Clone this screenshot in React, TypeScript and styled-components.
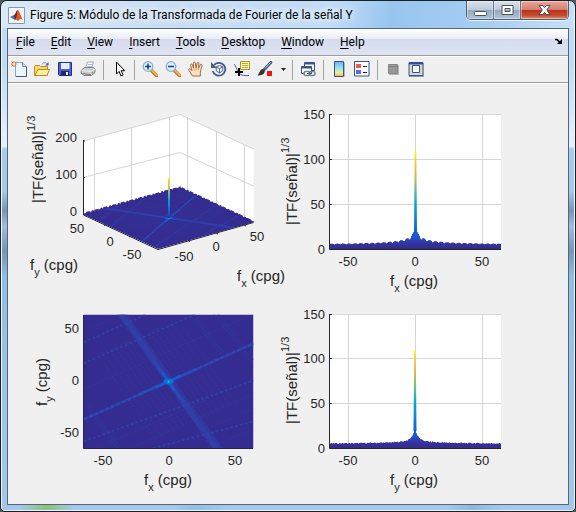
import React from "react";
import styled, { createGlobalStyle } from "styled-components";

const GlobalStyle = createGlobalStyle`
  * { box-sizing: border-box; }
  html, body, #root { height: 100%; }
  body { margin: 0; background: #55585c; overflow: hidden; }
`;

const Frame = styled.div`
  min-height: 100vh;
  display: flex;
  flex-direction: column;
  padding: 0 6px 6px;
  border: 1px solid #1b2027;
  border-radius: 7px 7px 5px 5px;
  box-shadow: inset 0 0 0 1px #eaf5ff;
  font-family: Roboto, "Open Sans", sans-serif;
  color: #000;
  background:
    linear-gradient(90deg, transparent 30%, #7fb0dd66 34%, transparent 39%, transparent 78%, #6f9cc466 82%, transparent 87%) bottom / 100% 7px no-repeat,
    radial-gradient(circle at 8%, #8fc07a 0, transparent 5%) bottom left / 100% 7px no-repeat,
    linear-gradient(#c4dcf3 0, #c2dbf2 60px, #d0e3f5 95px, #e8f1fa 145px, #a9cbec 148px, #a7c8e8 190px, #7894b4 210px, #a3bcdd 225px, #7795b5 250px, #8fbde2 275px, #9ec3e6 380px, #a5c8e8 100%);
`;

const TitleBar = styled.header`
  height: 27px;
  display: flex;
  align-items: flex-start;
  gap: 5px;
  margin: 0 -5px;
  padding: 1px 0 0 6px;
  border-radius: 6px 6px 0 0;
  background: linear-gradient(100deg, #d9e8f6 0, #c9def3 30%, #c0dcf6 58%, #98c5ef 68%, #a6cdf2 84%, #c9e0f5 100%);
`;

const AppIcon = styled.svg`
  width: 17px;
  height: 17px;
  margin-top: 5px;
  flex: none;
`;

const Title = styled.h1`
  flex: 1;
  margin: 0;
  padding-top: 3px;
  font-size: 12px;
  font-weight: 400;
  line-height: 20px;
  white-space: nowrap;
  text-shadow: 0 0 6px #fff, 0 0 8px #fff;
`;

const Caption = styled.div`
  display: flex;
  height: 19px;
  margin: -1px 5px 0 0;
  border: 1px solid #4d6076;
  border-top: 0;
  border-radius: 0 0 5px 5px;
  overflow: hidden;
  box-shadow: 0 1px 0 #e8f4ff;
`;

const CaptionButton = styled.button<{ $close?: boolean }>`
  width: ${(p) => (p.$close ? 47 : 27)}px;
  padding: 0;
  display: flex;
  align-items: center;
  justify-content: center;
  border: 0;
  border-right: ${(p) => (p.$close ? "0" : "1px solid #62768d")};
  box-shadow: inset 0 0 0 1px #ffffff66;
  background: ${(p) =>
    p.$close
      ? "linear-gradient(#e5a99c 0, #d5806f 48%, #b9341e 52%, #c84a2d 80%, #e0906c 100%)"
      : "linear-gradient(#d8e2ec 0, #bccad9 48%, #93a9bf 52%, #afc4d8 100%)"};
`;

const Client = styled.main`
  flex: 1;
  display: flex;
  flex-direction: column;
  border: 1px solid #51677c;
  background: #f0f0f0;
`;

const MenuBar = styled.nav`
  height: 27px;
  display: flex;
  align-items: center;
  border-bottom: 1px solid #9c9c9c;
  background: linear-gradient(#fff 0, #e9edf6 10px, #d5dbed 10px, #dfe4f3 100%);
`;

const MenuButton = styled.button`
  border: 0;
  padding: 0 8px;
  background: none;
  font-family: inherit;
  font-size: 12px;
  line-height: 20px;
  color: #000;
  u { text-underline-offset: 2px; }
`;

const DockButton = styled.button`
  margin-left: auto;
  width: 16px;
  height: 16px;
  margin-right: 1px;
  padding: 4px;
  border: 0;
  background: none;
  display: flex;
`;

const ToolBar = styled.div`
  height: 27px;
  display: flex;
  align-items: center;
  border-top: 1px solid #fff;
  border-bottom: 1px solid #9c9c9c;
`;

const Tool = styled.button<{ $narrow?: boolean }>`
  width: ${(p) => (p.$narrow ? 12 : 23)}px;
  height: 24px;
  padding: ${(p) => (p.$narrow ? "3px 1px 5px" : "3px 4px 5px 3px")};
  border: 0;
  background: none;
  display: flex;
  svg { display: block; }
`;

const Separator = styled.span`
  width: 1px;
  height: 20px;
  margin: 0 4px 0 3px;
  background: #a2a2a2;
`;

const Figure = styled.section`
  flex: 1;
  display: grid;
  grid-template-columns: 1fr 1fr;
  grid-template-rows: 210fr 211fr;
  box-shadow: inset 0 1px 0 #fff;
`;

const Chart = styled.svg`
  width: 100%;
  height: 100%;
  min-height: 0;
  overflow: visible;
  font-family: "Liberation Sans", Arial, sans-serif;
  fill: #262626;
`;

const Tick = styled.text`
  font-size: 13px;
`;

const Label = styled.text`
  font-size: 15px;
`;

const Small = styled.tspan`
  font-size: 11px;
`;

function Icon({ children, w = 16 }: { children: React.ReactNode; w?: number }) {
  return (
    <svg width={w} height="16" viewBox={`0 0 ${w} 16`}>
      {children}
    </svg>
  );
}

const Magnifier = ({ plus }: { plus?: boolean }) => (
  <Icon>
    <path d="M9.5 9.5 15 15" stroke="#b06c24" strokeWidth="3.4" strokeLinecap="round" />
    <path d="M10 9.5 15 14.3" stroke="#f9b04f" strokeWidth="2.2" strokeLinecap="round" />
    <circle cx="6" cy="5.5" r="4.8" fill="#d9f2fb" stroke="#8fabd2" strokeWidth="1.3" />
    <path d={plus ? "M3 5.5h6M6 2.5v6" : "M3 5.5h6"} stroke="#24418c" strokeWidth="1.6" />
  </Icon>
);

const icons: Record<string, React.ReactNode> = {
  new: (
    <Icon>
      <path d="M4.5 1.5h7l4 4v10h-11z" fill="#edf5ff" stroke="#8aa3cf" />
      <path d="M5 15.5h10.5V6" fill="none" stroke="#3c5a96" />
      <path d="M11.5 1.5v4h4" fill="#c2d6f2" stroke="#6b87bb" />
      <path d="M3 0v6M0 3h6M.8 .8l4.4 4.4M5.2.8.8 5.2" stroke="#e0703f" />
      <circle cx="3" cy="3" r="1.3" fill="#ffe9a8" />
    </Icon>
  ),
  open: (
    <Icon>
      <path d="M.5 14.5v-9l1-1h4l1 1h7v9z" fill="#f4d775" stroke="#b98d1f" />
      <path d="M1 14.5 4 8.5h11.5l-2.5 6z" fill="#fff0a0" stroke="#b98d1f" />
      <path d="M8 3.5c1-2.5 4-2.5 5-.5" fill="none" stroke="#7187b0" />
      <path d="M14.5 1v3.5H11z" fill="#4d6591" />
    </Icon>
  ),
  save: (
    <Icon>
      <path d="M1.5 1.5h13v13h-12l-1-1z" fill="#4c5fd0" stroke="#25308c" />
      <path d="M4 2h8v6H4z" fill="#e4edfa" />
      <path d="M12.5 2v6" stroke="#8fa2ea" />
      <path d="M4 10h8v4.5H4z" fill="#25276e" />
      <path d="M9 11h2v3H9z" fill="#f4f7ff" />
    </Icon>
  ),
  print: (
    <Icon>
      <path d="m5.5 7 2-6h6l-2 6z" fill="#fff" stroke="#9aa6bd" />
      <path d="M8 3.5h4M7.5 5.5h4" stroke="#a7b6cd" />
      <path d="m1.5 9 3-2.5h9l1.5 1.5v3.500l-3.500 3H4L1 12z" fill="#cbcdd0" stroke="#7d8085" />
      <path d="m1.500 9.500 9.500 1 4-2.500" fill="none" stroke="#f0f0f0" />
      <path d="m2.500 12.500 8.500 1.200" stroke="#777" />
      <circle cx="12.500" cy="11.500" r=".9" fill="#74a54c" />
    </Icon>
  ),
  pointer: (
    <Icon>
      <path d="M5.500 1v12l2.600-2.600 1.900 4.600 2.100-1-2-4.300h3.600z" fill="#fff" stroke="#000" />
    </Icon>
  ),
  zoomIn: <Magnifier plus />,
  zoomOut: <Magnifier />,
  pan: (
    <Icon>
      <path
        d="M4.500 15 1 9.500C0 8 1.600 7.200 2.700 8.400l1.200 1.300-1.300-5.200c-.4-1.700 1.400-2.200 1.900-.6l1.100 3.400-.3-5c0-1.700 1.900-1.700 2.100 0l.6 4.700L9 2.300c.2-1.600 2-1.300 1.900.2l-.5 5 1.800-3.600c.8-1.300 2.400-.5 1.800 1L12.300 11v4z"
        fill="#ffe1c2"
        stroke="#a06a42"
      />
      <path d="m5.600 7.500.5 2M8 7v2.500M10.400 7.500l-.3 2" stroke="#d69a69" />
    </Icon>
  ),
  rotate: (
    <Icon>
      <path d="M3.200 3.800a6.400 6.400 0 1 1-1.500 6.200" fill="none" stroke="#4a5c84" strokeWidth="1.800" />
      <path d="M0 1v6h6z" fill="#4a5c84" />
      <path d="m8.500 4.500 3.300 1.300v4L8.500 12l-3.300-2.200v-4z" fill="#e5edf8" stroke="#536892" />
      <path d="m5.200 6 3.300 1.500L11.800 6M8.500 7.500V12" fill="none" stroke="#536892" />
    </Icon>
  ),
  dataCursor: (
    <Icon>
      <path d="M6.500.5h9v8h-9z" fill="#fff9a9" stroke="#a69b32" />
      <path d="M8 2.500h6M8 4.500h6M8 6.500h6" stroke="#b9ae55" />
      <path d="M0 3c2 1 2 5 4 8s5 4 11 3.500" fill="none" stroke="#4b55c8" />
      <path d="M5 7v8M1 11h8" stroke="#000" strokeWidth="2" />
    </Icon>
  ),
  brush: (
    <Icon>
      <path d="m13.800 1.400-6.500 7" stroke="#4a5a7c" strokeWidth="3" strokeLinecap="round" />
      <path d="m13.600 1.400-5.500 6" stroke="#b5c4dd" />
      <path d="M7.800 9.700c.3 3.800-3.600 4.700-7.300 4.800C2 13 2.500 8.500 6 8z" fill="#3d3532" />
      <path d="M10 10h5v5h-5z" fill="#fa1010" />
    </Icon>
  ),
  caret: (
    <Icon w={10}>
      <path d="M3 7h5L5.500 10z" fill="#222" />
    </Icon>
  ),
  link: (
    <Icon>
      <path d="M4.500 1.500h10v8h-10z" fill="#fff" stroke="#3a5588" />
      <path d="M4.500 2.500h10" stroke="#3a5588" strokeWidth="2" />
      <path d="M1.500 5.500h10v7h-10z" fill="#fff" stroke="#3a5588" />
      <path d="M1.500 6.500h10" stroke="#3a5588" strokeWidth="2" />
      <rect x="4" y="10.500" width="6" height="4" rx="2" fill="#fff" stroke="#72808f" strokeWidth="1.400" />
      <rect x="9" y="10.500" width="6" height="4" rx="2" fill="none" stroke="#72808f" strokeWidth="1.400" />
      <path d="M7 12.500h5" stroke="#4a5766" />
    </Icon>
  ),
  colorbar: (
    <Icon>
      <defs>
        <linearGradient id="cb" x2="0" y2="1">
          <stop stopColor="#83a6fb" />
          <stop offset=".45" stopColor="#8cecec" />
          <stop offset=".75" stopColor="#f1ed91" />
          <stop offset="1" stopColor="#f7a478" />
        </linearGradient>
      </defs>
      <path d="M3.500.5h9v15h-9z" fill="url(#cb)" stroke="#35538c" />
      <path d="M13.500 1.500v14" stroke="#a6b3c9" />
    </Icon>
  ),
  legend: (
    <Icon>
      <path d="M.5.500h14.500v14.500H.5z" fill="#fff" stroke="#35538c" />
      <path d="M2 3h5v4H2z" fill="#ef5b4f" />
      <path d="M2 9h5v4H2z" fill="#5a6be4" />
      <path d="M9 5.500h4M9 11.500h4" stroke="#222" />
    </Icon>
  ),
  hideTools: (
    <Icon>
      <path d="M4 4h10v10H4z" fill="#b8b8b8" />
      <path d="M3.500 3.500h9v9h-9z" fill="#989898" stroke="#868686" />
      <path d="M4 5.500h8" stroke="#858585" />
    </Icon>
  ),
  showTools: (
    <Icon>
      <path d="M1 1.500h14v13H1z" fill="#d7d8c8" stroke="#3a5390" />
      <path d="M1 2.500h14" stroke="#2f4aa8" strokeWidth="2" />
      <path d="M4.500 4.500h7v7h-7z" fill="#fff" stroke="#3a5390" />
      <path d="M15.500 2v13.500H1" fill="none" stroke="#8994ad" />
    </Icon>
  ),
};

const toolGroups = [
  [["new", "New Figure"], ["open", "Open File"], ["save", "Save Figure"], ["print", "Print Figure"]],
  [["pointer", "Edit Plot"]],
  [["zoomIn", "Zoom In"], ["zoomOut", "Zoom Out"], ["pan", "Pan"], ["rotate", "Rotate 3D"], ["dataCursor", "Data Cursor"], ["brush", "Brush"], ["caret", "Brush Colors"]],
  [["link", "Link Plot"]],
  [["colorbar", "Insert Colorbar"], ["legend", "Insert Legend"]],
  [["hideTools", "Hide Plot Tools"], ["showTools", "Show Plot Tools"]],
];

const menus = ["File", "Edit", "View", "Insert", "Tools", "Desktop", "Window", "Help"];

const parula: [number, string][] = [
  [0, "#352a87"], [0.06, "#3534a4"], [0.12, "#1f55d0"], [0.2, "#0567e0"], [0.32, "#1485d4"],
  [0.45, "#06a7c6"], [0.58, "#4fbb96"], [0.7, "#a8be6b"], [0.82, "#f0ba4b"], [0.92, "#fbce2f"], [1, "#f9fb0e"],
];

function Parula({ id, bottom, top }: { id: string; bottom: number; top: number }) {
  return (
    <linearGradient id={id} gradientUnits="userSpaceOnUse" x1="0" x2="0" y1={bottom} y2={top}>
      {parula.map(([o, c]) => (
        <stop key={o} offset={o} stopColor={c} />
      ))}
    </linearGradient>
  );
}

const noise = (n: number) => {
  const v = Math.sin(n * 12.9898) * 43758.5453;
  return v - Math.floor(v);
};

/* Height in pixels of the projected spectrum at distance d from its centre. */
function lobed(d: number) {
  const a = Math.abs(d);
  if (a < 5.5) return 18 - a * a * 0.3;
  return 3.6 + 82 / (a + 10) + (0.6 + 24 / (a + 3)) * Math.abs(Math.cos((Math.PI * (a - 8.5)) / 5.8));
}

function smooth(d: number) {
  const a = Math.abs(d);
  return 3.6 + 58 / (a + 11) + 10 * Math.exp(-a / 3) + noise(Math.round(d) + 200) * 0.8;
}

function spectrum(height: (d: number) => number, base: number, cx: number) {
  let d = `M330 ${base}`;
  for (let x = 330; x < 501; x++) {
    d += `V${(base - height(x + 0.5 - cx)).toFixed(1)}H${x + 1}`;
  }
  return `${d}V${base}Z`;
}

type ProfileProps = {
  id: string;
  view: string;
  top: number;
  step: number;
  axis: string;
  height: (d: number) => number;
  cx: number;
};

function Profile({ id, view, top, step, axis, height, cx }: ProfileProps) {
  const base = Math.round(top + 3 * step);
  return (
    <Chart viewBox={view}>
      <defs>
        <Parula id={id} bottom={base} top={base - 98} />
      </defs>
      <rect x="330" y={top} width="171" height={base - top} fill="#fff" />
      <g stroke="#d5d5d5">
        {[349, 416, 483].map((x) => (
          <path key={x} d={`M${x - 0.5} ${top}V${base}`} />
        ))}
        {[0, 1, 2].map((n) => (
          <path key={n} d={`M330 ${Math.floor(top + n * step) + 0.5}H501`} />
        ))}
      </g>
      <path d={spectrum(height, base, cx)} fill={`url(#${id})`} />
      <path d={`M${cx - 1.5} ${base - 17}L${cx - 0.8} ${base - 98}h1.600L${cx + 1.5} ${base - 17}z`} fill={`url(#${id})`} />
      <path
        d={`M501 ${base + 0.5}H329.500V${top}M330 ${top + 0.5}h2M330 ${Math.floor(top + step) + 0.5}h2M330 ${Math.floor(top + 2 * step) + 0.5}h2`}
        fill="none"
        stroke="#262626"
      />
      {[150, 100, 50, 0].map((v, n) => (
        <Tick key={v} x="325" y={Math.round(top + 4.500 + n * step)} textAnchor="end">{v}</Tick>
      ))}
      {[[-50, 348], [0, 415], [50, 482]].map(([v, x]) => (
        <Tick key={v} x={x} y={base + 17} textAnchor="middle">{v}</Tick>
      ))}
      <Label x="390" y={base + 37}>
        f<Small dy="6">{axis}</Small>
        <tspan dy="-6"> (cpg)</tspan>
      </Label>
      <Label transform={`translate(297 ${base - 24}) rotate(-90)`}>
        |TF(señal)|<Small dy="-8">1/3</Small>
      </Label>
    </Chart>
  );
}

/* Spectrum seen from above; coordinates run over 170 by 134 units. */
function SpectrumMap() {
  return (
    <g clipPath="url(#mapClip)" fill="none">
      <rect width="170" height="134" fill="#352d91" />
      <g stroke="#3341a6" strokeWidth="1" opacity=".5" strokeDasharray="2 2">
        {[-40, -34, -28, -22, -17, -12, -8, 8, 12, 17, 22, 28, 34, 40].map((o) => (
          <path key={o} d={`M${85 + o - 28} ${67 - 40 - o * 0.45}L${85 + o + 28} ${67 + 40 - o * 0.45}`} />
        ))}
        {[-88, -58, -30, 35, 50, 65, 85].map((o) => (
          <path key={o} d={`M0 ${105 + o}L170 ${29 + o}`} />
        ))}
      </g>
      <path d="M33-8 140 142" stroke="#3140a8" strokeWidth="9" opacity=".5" />
      <path d="M38 0 133 134" stroke="#2f45b0" strokeWidth="5" opacity=".6" />
      <g stroke="#2e4bb4" strokeWidth="2" opacity=".6" strokeDasharray="3 2">
        <path d="M0 28 64-1M0 49 112 0M0 127 170 66M50 139 170 107" />
      </g>
      <g stroke="#2f43a9" strokeWidth="6" opacity=".45" strokeDasharray="1 2">
        <path d="M132-2 170 48M0 86 38 138M108 0 140 40" />
      </g>
      <path d="M0 105 170 29" stroke="#2f48b2" strokeWidth="3" opacity=".5" />
      <path d="M0 105 170 29" stroke="#2a51bf" strokeWidth="2" strokeDasharray="4 2" opacity=".75" />
      <path d="M55 80 115 54M70 46 100 88" stroke="#2258c8" strokeWidth="3" opacity=".4" />
      <path d="M72 73 98 61M79 58 91 76" stroke="#1463d8" strokeWidth="3" opacity=".6" />
      <ellipse cx="85" cy="67" rx="5" ry="3" fill="#0872de" />
      <circle cx="85" cy="67" r="1" fill="#39bfae" />
    </g>
  );
}

function Surface() {
  return (
    <Chart viewBox="8 83 280 210">
      <defs>
        <Parula id="surfaceSpike" bottom={218} top={178} />
        <clipPath id="mapClip">
          <path d="M0 0H170V134H0Z" />
        </clipPath>
      </defs>
      <path d="M83 141 180 114.500 253.500 149V222L158 249 83 214.500Z" fill="#fff" />
      <path
        d="M83 141 180 114.500 253.500 149M83 177.500 180 152.500 253.500 186M94.500 138V211M131.500 128V201M169.500 117.500V191M187.500 118V191M216.500 131.500V205M244.500 145V218"
        fill="none"
        stroke="#d5d5d5"
      />
      <path d="M83.500 140V215L158 249.500 253.500 222.500M83 141h2M83 177.500h2M106 224.500l-2 1M131 236l-2 1M188 240.500l2 1M216 233l2 1M244 225l2 1" fill="none" stroke="#262626" />
      <g transform="matrix(.571 -.159 .56 .257 83 214.500)">
        <SpectrumMap />
      </g>
      <path d="M84 214 180 188 253 222" fill="none" stroke="#352b89" strokeWidth="1" />
      <path d="M86 213 180 187.500 252 221" fill="none" stroke="#352b89" strokeWidth="2" strokeDasharray="4 2 2 1" />
      <path d="M168 214V178h2V214l3 2-4 2-5-2z" fill="url(#surfaceSpike)" />
      <Tick x="77" y="142" textAnchor="end">200</Tick>
      <Tick x="77" y="179" textAnchor="end">100</Tick>
      <Tick x="77" y="216" textAnchor="end">0</Tick>
      <Tick x="77" y="233" textAnchor="middle">50</Tick>
      <Tick x="110" y="246" textAnchor="middle">0</Tick>
      <Tick x="132" y="259" textAnchor="middle">-50</Tick>
      <Tick x="184" y="261" textAnchor="middle">-50</Tick>
      <Tick x="216" y="251" textAnchor="middle">0</Tick>
      <Tick x="257" y="241" textAnchor="middle">50</Tick>
      <Label x="30" y="270">
        f<Small dy="6">y</Small>
        <tspan dy="-6"> (cpg)</tspan>
      </Label>
      <Label x="237" y="281">
        f<Small dy="6">x</Small>
        <tspan dy="-6"> (cpg)</tspan>
      </Label>
      <Label transform="translate(43 203) rotate(-90)">
        |TF(señal)|<Small dy="-8">1/3</Small>
      </Label>
    </Chart>
  );
}

function TopView() {
  return (
    <Chart viewBox="8 293 280 211">
      <g transform="translate(83.500 314.500)">
        <SpectrumMap />
      </g>
      <path d="M83.500 315V448.500H253" fill="none" stroke="#262640" />
      {[[50, 333], [0, 385], [-50, 437]].map(([v, y]) => (
        <Tick key={v} x="79" y={y} textAnchor="end">{v}</Tick>
      ))}
      {[[-50, 103], [0, 169], [50, 235]].map(([v, x]) => (
        <Tick key={v} x={x} y="465" textAnchor="middle">{v}</Tick>
      ))}
      <Label x="144" y="485">
        f<Small dy="6">x</Small>
        <tspan dy="-6"> (cpg)</tspan>
      </Label>
      <Label transform="translate(47 406) rotate(-90)">
        f<Small dy="6">y</Small>
        <tspan dy="-6"> (cpg)</tspan>
      </Label>
    </Chart>
  );
}

export default function App() {
  return (
    <>
      <GlobalStyle />
      <Frame>
        <TitleBar>
          <AppIcon viewBox="0 0 17 17">
            <path d="M.5.500h16v16H.5z" fill="#eef4fa" stroke="#8c98a5" />
            <path d="m2 10 4-2 3 3-2 2z" fill="#3c76b8" />
            <path d="M6 8c2-1 2-5 4-5l-1 8-2 2z" fill="#6b2b22" />
            <path d="M10 3c2 2 3 7 5 10-2-2-3-1-5 1L7.500 12C9 10 9 6 10 3z" fill="#df5a22" />
          </AppIcon>
          <Title>Figure 5: Módulo de la Transformada de Fourier de la señal Y</Title>
          <Caption>
            <CaptionButton aria-label="Minimize">
              <svg width="13" height="16">
                <rect x=".5" y="9.500" width="12" height="4" rx="1" fill="#fff" stroke="#4b5264" />
              </svg>
            </CaptionButton>
            <CaptionButton aria-label="Maximize">
              <svg width="13" height="12">
                <path d="M1 1.500h11v9H1zM4 4.500h5v3H4z" fill="#fff" fillRule="evenodd" stroke="#4b5264" />
              </svg>
            </CaptionButton>
            <CaptionButton $close aria-label="Close">
              <svg width="13" height="12">
                <path d="M1 1.500h3.500l2 2 2-2H12L8.800 6l3.200 4.500H8.500l-2-2-2 2H1L4.200 6z" fill="#fff" stroke="#4d4556" />
              </svg>
            </CaptionButton>
          </Caption>
        </TitleBar>
        <Client>
          <MenuBar>
            {menus.map((m) => (
              <MenuButton key={m}>
                <u>{m[0]}</u>
                {m.slice(1)}
              </MenuButton>
            ))}
            <DockButton aria-label="Dock figure">
              <svg width="8" height="8" viewBox="0 0 8 8">
                <path d="M0 1.500h2l3 3" fill="none" stroke="#000" strokeWidth="1.600" />
                <path d="M7 1v5H2z" fill="#000" />
              </svg>
            </DockButton>
          </MenuBar>
          <ToolBar role="toolbar">
            {toolGroups.map((group, n) => (
              <React.Fragment key={n}>
                {n > 0 && <Separator />}
                {group.map(([key, label]) => (
                  <Tool key={key} aria-label={label} $narrow={key === "caret"}>
                    {icons[key]}
                  </Tool>
                ))}
              </React.Fragment>
            ))}
          </ToolBar>
          <Figure>
            <Surface />
            <Profile id="profileX" view="288 83 280 210" top={114} step={45} axis="x" height={lobed} cx={415.5} />
            <TopView />
            <Profile id="profileY" view="288 293 280 211" top={314} step={44.667} axis="y" height={smooth} cx={415} />
          </Figure>
        </Client>
      </Frame>
    </>
  );
}
